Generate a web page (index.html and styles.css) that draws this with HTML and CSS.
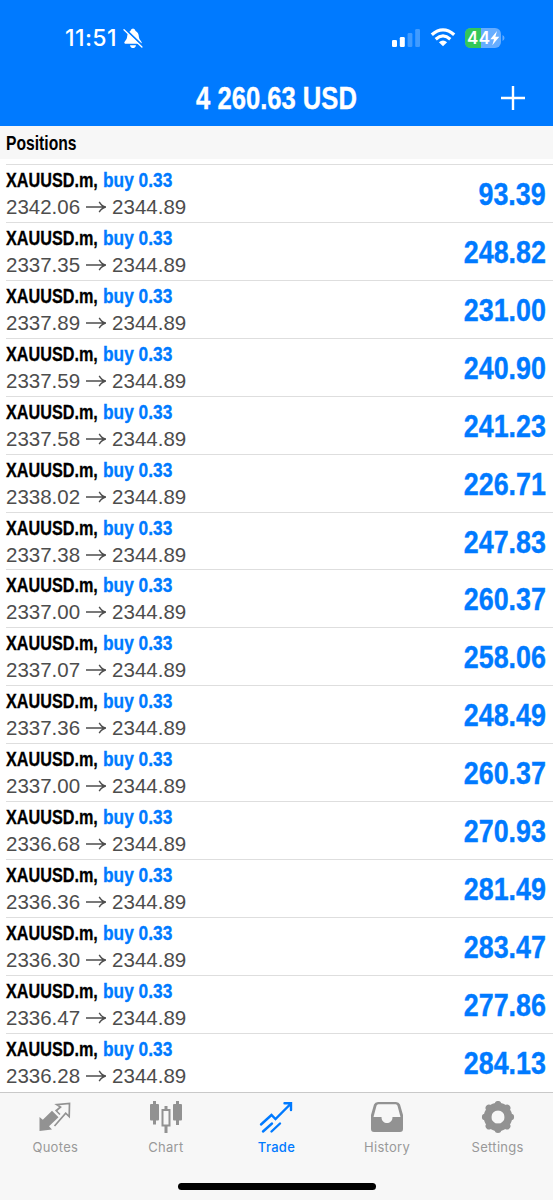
FILE: index.html
```html
<!DOCTYPE html>
<html lang="en">
  <head>
    <meta charset="UTF-8" />
    <title>Trade</title>
    <link rel="stylesheet" href="styles.css">
  </head>
  <body>
    <svg class="defs" width="0" height="0">
      <symbol id="arrow" viewBox="0 0 20 12">
        <path d="M0 6H19M13.2 0.8Q15.5 5 19.8 6Q15.5 7 13.2 11.2" fill="none" stroke="currentColor" stroke-width="1.4" />
      </symbol>
    </svg>

    <header class="header">
      <div class="status-bar">
        <span class="clock">11:51</span>
        <svg class="bell" width="20" height="20" viewBox="0 0 20 20">
          <path d="M2 15.8Q0.5 15 1.8 13.6Q4 11.5 4.1 9Q4.3 4.4 7.4 3Q8 0.4 10 0.4T12.6 3Q15.7 4.4 15.9 9Q16 11.5 18.2 13.6Q19.5 15 18 15.8ZM7 17.2H13Q12.5 20 10 20T7 17.2Z" fill="#fff" />
          <path d="M2.2 1.2L20 18.2" stroke="#007aff" stroke-width="2.2" />
          <path d="M1 1.8L18.9 19" stroke="#fff" stroke-width="1.4" stroke-linecap="round" />
        </svg>
        <svg class="signal" width="28" height="18" viewBox="0 0 28 18" fill="#fff">
          <rect x="0" y="11" width="5" height="7" rx="1.3" />
          <rect x="7.8" y="8" width="5" height="10" rx="1.3" />
          <rect x="15.6" y="4" width="4.8" height="14" rx="1.3" opacity=".25" />
          <rect x="23.2" y="0" width="4.8" height="18" rx="1.3" opacity=".25" />
        </svg>
        <svg class="wifi" width="26" height="19" viewBox="0 0 26 19">
          <path d="M1.8 6.8Q13-3.1 24.2 6.8" fill="none" stroke="#fff" stroke-width="3.3" />
          <path d="M5.7 11.2Q13 4.7 20.3 11.2" fill="none" stroke="#fff" stroke-width="3.2" />
          <path d="M8.9 14.2Q13 10.8 17.1 14.2L13 18.3Z" fill="#fff" />
        </svg>
        <svg class="battery" width="40" height="20" viewBox="0 0 40 20">
          <rect width="36" height="20" rx="6" fill="#66adff" />
          <path d="M6 0H16V20H6Q0 20 0 14V6Q0 0 6 0Z" fill="#34c759" />
          <path d="M37.5 7Q39.5 8 39.5 10T37.5 13Z" fill="#66adff" />
          <text class="battery-level" x="2" y="16.2" textLength="23">44</text>
          <path d="M32 3L25.3 11.2H29L27.3 17.2L34.3 8.8H30.4Z" fill="#fff" />
        </svg>
      </div>
      <div class="title-bar">
        <h1 class="balance">4 260.63 USD</h1>
        <svg class="add" width="24" height="24" viewBox="0 0 24 24">
          <path d="M12 0V24M0 12H24" stroke="#fff" stroke-width="2.4" />
        </svg>
      </div>
    </header>

    <h2 class="section-title"><span>Positions</span></h2>

    <main class="positions">
      <div class="position">
        <div class="info">
          <div class="deal"><span class="symbol">XAUUSD.m,</span><span class="side">buy 0.33</span></div>
          <div class="prices">2342.06<svg class="arrow"><use href="#arrow" /></svg>2344.89</div>
        </div>
        <div class="profit">93.39</div>
      </div>
      <div class="position">
        <div class="info">
          <div class="deal"><span class="symbol">XAUUSD.m,</span><span class="side">buy 0.33</span></div>
          <div class="prices">2337.35<svg class="arrow"><use href="#arrow" /></svg>2344.89</div>
        </div>
        <div class="profit">248.82</div>
      </div>
      <div class="position">
        <div class="info">
          <div class="deal"><span class="symbol">XAUUSD.m,</span><span class="side">buy 0.33</span></div>
          <div class="prices">2337.89<svg class="arrow"><use href="#arrow" /></svg>2344.89</div>
        </div>
        <div class="profit">231.00</div>
      </div>
      <div class="position">
        <div class="info">
          <div class="deal"><span class="symbol">XAUUSD.m,</span><span class="side">buy 0.33</span></div>
          <div class="prices">2337.59<svg class="arrow"><use href="#arrow" /></svg>2344.89</div>
        </div>
        <div class="profit">240.90</div>
      </div>
      <div class="position">
        <div class="info">
          <div class="deal"><span class="symbol">XAUUSD.m,</span><span class="side">buy 0.33</span></div>
          <div class="prices">2337.58<svg class="arrow"><use href="#arrow" /></svg>2344.89</div>
        </div>
        <div class="profit">241.23</div>
      </div>
      <div class="position">
        <div class="info">
          <div class="deal"><span class="symbol">XAUUSD.m,</span><span class="side">buy 0.33</span></div>
          <div class="prices">2338.02<svg class="arrow"><use href="#arrow" /></svg>2344.89</div>
        </div>
        <div class="profit">226.71</div>
      </div>
      <div class="position">
        <div class="info">
          <div class="deal"><span class="symbol">XAUUSD.m,</span><span class="side">buy 0.33</span></div>
          <div class="prices">2337.38<svg class="arrow"><use href="#arrow" /></svg>2344.89</div>
        </div>
        <div class="profit">247.83</div>
      </div>
      <div class="position">
        <div class="info">
          <div class="deal"><span class="symbol">XAUUSD.m,</span><span class="side">buy 0.33</span></div>
          <div class="prices">2337.00<svg class="arrow"><use href="#arrow" /></svg>2344.89</div>
        </div>
        <div class="profit">260.37</div>
      </div>
      <div class="position">
        <div class="info">
          <div class="deal"><span class="symbol">XAUUSD.m,</span><span class="side">buy 0.33</span></div>
          <div class="prices">2337.07<svg class="arrow"><use href="#arrow" /></svg>2344.89</div>
        </div>
        <div class="profit">258.06</div>
      </div>
      <div class="position">
        <div class="info">
          <div class="deal"><span class="symbol">XAUUSD.m,</span><span class="side">buy 0.33</span></div>
          <div class="prices">2337.36<svg class="arrow"><use href="#arrow" /></svg>2344.89</div>
        </div>
        <div class="profit">248.49</div>
      </div>
      <div class="position">
        <div class="info">
          <div class="deal"><span class="symbol">XAUUSD.m,</span><span class="side">buy 0.33</span></div>
          <div class="prices">2337.00<svg class="arrow"><use href="#arrow" /></svg>2344.89</div>
        </div>
        <div class="profit">260.37</div>
      </div>
      <div class="position">
        <div class="info">
          <div class="deal"><span class="symbol">XAUUSD.m,</span><span class="side">buy 0.33</span></div>
          <div class="prices">2336.68<svg class="arrow"><use href="#arrow" /></svg>2344.89</div>
        </div>
        <div class="profit">270.93</div>
      </div>
      <div class="position">
        <div class="info">
          <div class="deal"><span class="symbol">XAUUSD.m,</span><span class="side">buy 0.33</span></div>
          <div class="prices">2336.36<svg class="arrow"><use href="#arrow" /></svg>2344.89</div>
        </div>
        <div class="profit">281.49</div>
      </div>
      <div class="position">
        <div class="info">
          <div class="deal"><span class="symbol">XAUUSD.m,</span><span class="side">buy 0.33</span></div>
          <div class="prices">2336.30<svg class="arrow"><use href="#arrow" /></svg>2344.89</div>
        </div>
        <div class="profit">283.47</div>
      </div>
      <div class="position">
        <div class="info">
          <div class="deal"><span class="symbol">XAUUSD.m,</span><span class="side">buy 0.33</span></div>
          <div class="prices">2336.47<svg class="arrow"><use href="#arrow" /></svg>2344.89</div>
        </div>
        <div class="profit">277.86</div>
      </div>
      <div class="position">
        <div class="info">
          <div class="deal"><span class="symbol">XAUUSD.m,</span><span class="side">buy 0.33</span></div>
          <div class="prices">2336.28<svg class="arrow"><use href="#arrow" /></svg>2344.89</div>
        </div>
        <div class="profit">284.13</div>
      </div>
    </main>

    <footer class="footer">
      <nav class="tabs">
        <a class="tab">
          <svg width="34" height="34" viewBox="0 0 34 34">
            <path d="M1.5 16L4.8 18.7L14 9.8L20.5 16.3L11 25.2L14 28.5L1.5 30Z" fill="#929292" />
            <path d="M18.5 9.5L22.5 6L18.8 3.6L31.5 2.5L31.2 15.5L27.7 12.2L16.5 25" fill="none" stroke="#929292" stroke-width="1.7" />
            <path d="M17.5 9L22 13.5" stroke="#929292" stroke-width="1.5" />
          </svg>
          <span>Quotes</span>
        </a>
        <a class="tab">
          <svg width="34" height="34" viewBox="0 0 34 34">
            <path d="M5.5 0V23.5M17 5V32M28.5 0V24" stroke="#929292" stroke-width="3" />
            <rect x="1" y="3" width="9" height="16.5" rx="1" fill="#929292" />
            <rect x="24" y="3" width="9" height="16.5" rx="1" fill="#929292" />
            <rect x="13.5" y="9" width="7" height="15.5" fill="#f7f7f7" stroke="#929292" stroke-width="2" />
          </svg>
          <span>Chart</span>
        </a>
        <a class="tab active">
          <svg width="34" height="34" viewBox="0 0 34 34" fill="none" stroke="#007aff" stroke-width="2.4">
            <path d="M2 23.5L12.5 14L16.5 18L31.5 3M25.5 2.3H32V9M4 30.5L13 22.5M12.5 30.5L21 22.5" stroke-linecap="round" />
          </svg>
          <span>Trade</span>
        </a>
        <a class="tab">
          <svg width="34" height="34" viewBox="0 0 34 34">
            <path fill-rule="evenodd" d="M8 1H26Q29 1 30 3.5L33 14V28Q33 31 30 31H4Q1 31 1 28V14L4 3.5Q5 1 8 1ZM8.3 3.3Q7 3.3 6.5 4.8L3.5 16H11.5C11.5 24 22.5 24 22.5 16H30.5L27.5 4.8Q27 3.3 25.7 3.3Z" fill="#929292" />
          </svg>
          <span>History</span>
        </a>
        <a class="tab">
          <svg width="34" height="34" viewBox="0 0 34 34">
            <circle cx="17" cy="16" r="10.4" fill="none" stroke="#929292" stroke-width="7.6" />
            <path d="M17 3.2V6M17 26V28.8M4.2 16H7M27 16H29.8M7.9 6.9L10 9M24 23L26.1 25.1M26.1 6.9L24 9M10 23L7.9 25.1" stroke="#929292" stroke-width="6.6" stroke-linecap="round" />
          </svg>
          <span>Settings</span>
        </a>
      </nav>
      <div class="home-indicator"></div>
    </footer>
  </body>
</html>
```
FILE: styles.css
```css
* {
    box-sizing: border-box;
}

body {
    margin: 0;
    width: 553px;
    height: 1200px;
    overflow: hidden;
    display: flex;
    flex-direction: column;
    font-family: "Liberation Sans", Arial, sans-serif;
    background: #fff;
}

.defs {
    position: absolute;
}

.header {
    height: 126px;
    flex: none;
    background: #007aff;
    color: #fff;
}

.status-bar {
    display: flex;
    align-items: center;
    height: 74px;
    padding: 1px 0 0 65px;
}

.clock {
    font: 500 23px/26px Inter, sans-serif;
    width: 58px;
    letter-spacing: 0.4px;
}

.bell {
    margin-top: 1px;
}

.signal {
    margin-left: 249px;
}

.wifi {
    margin-left: 10px;
}

.battery {
    margin-left: 9px;
}

.battery-level {
    font: 600 17px Inter, sans-serif;
    fill: #fff;
}

.title-bar {
    display: grid;
    grid-template-columns: 1fr auto 1fr;
    align-items: center;
    height: 48px;
    padding-right: 28px;
    padding-left: 28px;
}

.balance {
    grid-column: 2;
    margin: 0;
    font-size: 32px;
    line-height: 36px;
    white-space: nowrap;
    transform: scaleX(0.8);
    -webkit-text-stroke: 0.4px;
}

.add {
    justify-self: end;
}

.section-title {
    flex: none;
    height: 33px;
    margin: 0 0 5px;
    padding: 5px 6px;
    background: #f7f7f7;
    font-size: 20.5px;
    line-height: 24px;
}

.section-title span {
    display: inline-block;
    transform: scaleX(0.765);
    transform-origin: left;
}

.positions {
    flex: none;
    height: 928px;
}

.position {
    display: flex;
    justify-content: space-between;
    height: 57.93px;
    margin-left: 6px;
    padding-right: 7px;
    border-top: 1px solid #dedede;
}

.info {
    padding-top: 2px;
}

/* condensed bold text */
.deal {
    display: flex;
    height: 27px;
    font-size: 20.5px;
    font-weight: 700;
    line-height: 26px;
    white-space: nowrap;
    -webkit-text-stroke: 0.3px;
}

.symbol {
    width: 97px;
    color: #000;
    transform: scaleX(0.79);
    transform-origin: left;
}

.side {
    color: #007aff;
    transform: scaleX(0.845);
    transform-origin: left;
}

.prices {
    display: flex;
    align-items: center;
    font-size: 20.5px;
    line-height: 26px;
    color: #4d4d4d;
}

.arrow {
    width: 20px;
    height: 12px;
    margin: 0 6px;
}

.profit {
    color: #007aff;
    font-size: 31px;
    font-weight: 700;
    line-height: 59px;
    transform: scaleX(0.865);
    transform-origin: right;
    -webkit-text-stroke: 0.4px;
}

.footer {
    flex: 1;
    border-top: 1px solid #c9c9c9;
    background: #f7f7f7;
}

.tabs {
    display: grid;
    grid-template-columns: repeat(5, 1fr);
    height: 90px;
    padding-top: 8px;
}

.tab {
    display: flex;
    flex-direction: column;
    align-items: center;
    color: #999;
    font: 400 13px/18px Inter, sans-serif;
    letter-spacing: 0.3px;
}

.tab span {
    margin-top: 3px;
}

.active {
    color: #007aff;
    font-weight: 500;
}

.home-indicator {
    width: 198px;
    height: 7px;
    margin: 0 auto;
    border-radius: 4px;
    background: #000;
}
```
